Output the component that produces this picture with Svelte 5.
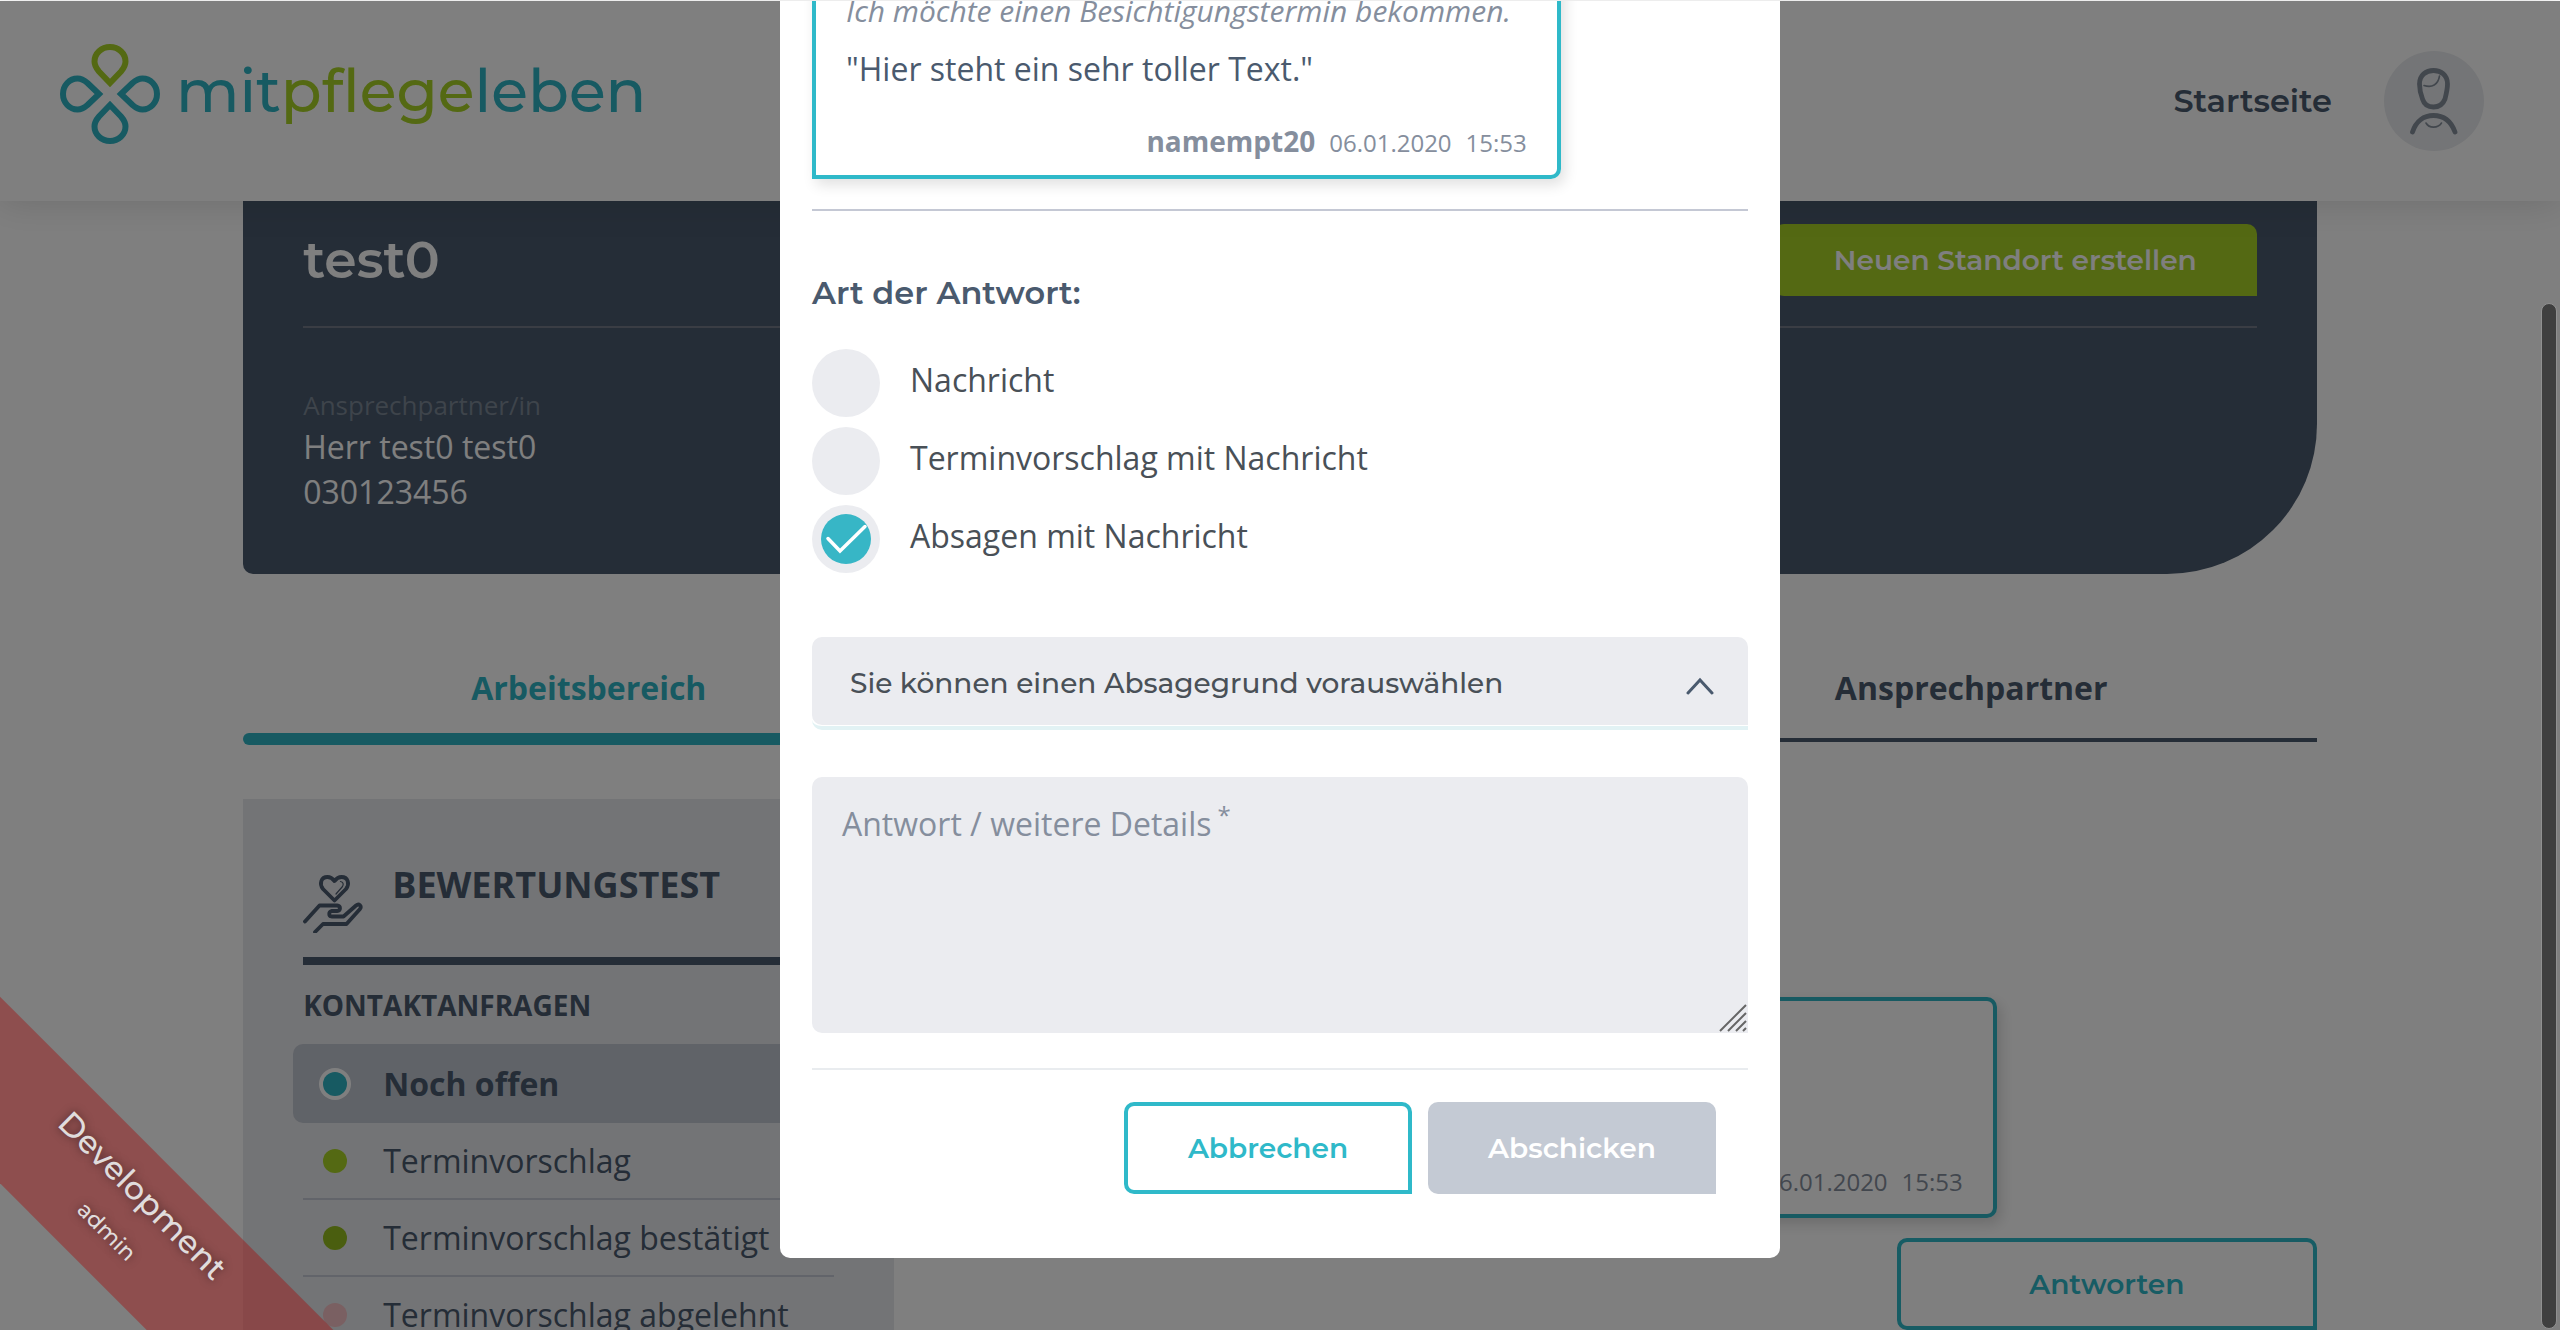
<script>
  let answer = $state('absage');
  let details = $state('');

  const kinds = [
    { id: 'nachricht', label: 'Nachricht' },
    { id: 'termin', label: 'Terminvorschlag mit Nachricht' },
    { id: 'absage', label: 'Absagen mit Nachricht' },
  ];

  const requests = [
    { label: 'Noch offen', tone: 'teal', active: true },
    { label: 'Terminvorschlag', tone: 'lime' },
    { label: 'Terminvorschlag bestätigt', tone: 'green' },
    { label: 'Terminvorschlag abgelehnt', tone: 'pink' },
  ];

  const petal =
    'M50 39 L39 27.5 C36 24 34.5 21.5 34.5 17.5 A15.5 14.5 0 0 1 65.5 17.5 C65.5 21.5 64 24 61 27.5 Z';
</script>

<div class="page">
  <header class="topbar">
    <a class="logo" href="#start" aria-label="mitpflegeleben">
      <svg viewBox="0 0 100 100" width="100" height="100" fill="none" stroke-width="6">
        {#each [90, 180, 270] as turn}
          <path stroke="#2fb4c4" d={petal} transform="rotate({turn} 50 50)" />
        {/each}
        <path stroke="#a8d226" d={petal} />
      </svg>
      <span class="wordmark">mit<b>pflege</b>leben</span>
    </a>
    <nav class="topnav">
      <a class="home" href="#start">Startseite</a>
      <button class="avatar" aria-label="Profil">
        <svg viewBox="0 0 100 100" width="100" height="100" fill="none" stroke="#848e9b" stroke-linecap="round">
          <path stroke-width="4.8" d="M35.5 33 C35.5 24 42 19.5 49.5 19.5 C57 19.5 63.5 24 63.5 33 C63.5 38 62 44 61 48 C59 53 55 56 49.5 56 C44 56 40 53 38.5 48 C37 44 35.5 38 35.5 33 Z" />
          <path stroke-width="1.6" d="M40 34.5 C48 37 54 34 55.5 25" />
          <path stroke-width="4.8" d="M28.5 81 C32 70 40 64.5 49.5 64.5 C59 64.5 67 70 71 81" />
          <path stroke-width="1.6" d="M42 72 C45 77.5 54 77.5 57.5 72" />
        </svg>
      </button>
    </nav>
  </header>

  <main>
    <section class="hero">
      <div class="hero-head">
        <h1>test0</h1>
        <button class="create">Neuen Standort erstellen</button>
      </div>
      <p class="hero-label">Ansprechpartner/in</p>
      <p class="hero-text">Herr test0 test0</p>
      <p class="hero-text">030123456</p>
    </section>

    <nav class="tabs">
      <a class="tab active" href="#arbeitsbereich">Arbeitsbereich</a>
      <span class="tab"></span>
      <a class="tab" href="#ansprechpartner">Ansprechpartner</a>
    </nav>

    <div class="content">
      <aside class="card">
        <div class="card-head">
          <svg viewBox="0 0 60 58" width="60" height="58" fill="none" stroke="#4a5a6e" stroke-width="3.8" stroke-linecap="round" stroke-linejoin="round">
            <path d="M31.5 25.5 L20 14 C16 9 18 2 24.5 2 C28 2 30 4 31.5 6 C33 4 35 2 38.5 2 C45 2 47 9 43 14 Z" />
            <path stroke-width="1.2" d="M33 19 L39.5 11.5 C41 9 40 7 37.5 6.5" />
            <path d="M2 46.5 L16.5 30.5 H34 C38 31 38 35.5 34 36 H28.5 C25.5 37 25.5 41 28.5 41.5 H40.5 L53 30.5 C56 28 59 31 57 34 L43.5 49 H20 L12 57" />
          </svg>
          <h2>BEWERTUNGSTEST</h2>
        </div>
        <h3>KONTAKTANFRAGEN</h3>
        <ul>
          {#each requests as item}
            <li class:active={item.active}>
              <a href="#anfragen"><i class="dot {item.tone}"></i>{item.label}</a>
            </li>
          {/each}
        </ul>
      </aside>

      <section class="thread">
        <div class="note">
          <div class="meta"><span>06.01.2020</span><span>15:53</span></div>
        </div>
        <button class="outline reply">Antworten</button>
      </section>
    </div>
  </main>

  <div class="backdrop">
    <form class="modal" onsubmit={(e) => e.preventDefault()}>
      <div class="bubble">
        <p class="subject">Ich möchte einen Besichtigungstermin bekommen.</p>
        <p class="quote">"Hier steht ein sehr toller Text."</p>
        <div class="meta"><strong>namempt20</strong><span>06.01.2020</span><span>15:53</span></div>
      </div>
      <fieldset>
        <legend>Art der Antwort:</legend>
        {#each kinds as kind}
          <label class="choice">
            <span class="mark">
              <input type="radio" name="kind" value={kind.id} bind:group={answer} />
              {#if answer === kind.id}
                <svg viewBox="0 0 68 68" width="68" height="68">
                  <circle cx="34" cy="34" r="25" fill="#37b6c6" />
                  <path d="M16 33.5 L28 46 L53 21.5" fill="none" stroke="#fff" stroke-width="3.5" stroke-linecap="round" />
                </svg>
              {/if}
            </span>
            <span class="choice-text">{kind.label}</span>
          </label>
        {/each}
      </fieldset>
      <div class="select">
        <select aria-label="Absagegrund">
          <option>Sie können einen Absagegrund vorauswählen</option>
        </select>
        <svg viewBox="0 0 28 18" width="28" height="18" fill="none" stroke="#4a5a6e" stroke-width="3" stroke-linecap="round">
          <path d="M2 16 L14 3 L26 16" />
        </svg>
      </div>
      <div class="area">
        <textarea id="details" bind:value={details}></textarea>
        <label for="details">Antwort / weitere Details<sup>*</sup></label>
        <svg viewBox="0 0 28 28" width="28" height="28" fill="none" stroke="#666" stroke-width="2">
          <path d="M1 27 L27 1 M9 27 L27 9 M17 27 L27 17 M24 27 L27 24" />
        </svg>
      </div>
      <div class="actions">
        <button type="button" class="outline">Abbrechen</button>
        <button type="submit" class="send">Abschicken</button>
      </div>
    </form>
    <div class="scrollbar"></div>
  </div>

  <div class="ribbon-layer">
    <div class="ribbon">
      <span class="env">Development</span>
      <span class="role">admin</span>
    </div>
  </div>
</div>

<style>
  :global(body) {
    margin: 0;
    background: #fff;
  }
  .page {
    --head: Montserrat, Inter, sans-serif;
    --ink: #4a5a6e;
    --teal: #2fb9c9;
    position: relative;
    box-sizing: border-box;
    height: 100vh;
    padding-top: 1px;
    overflow: hidden;
    font-family: 'Open Sans', sans-serif;
    font-size: 32px;
    color: var(--ink);
  }
  .page * {
    box-sizing: border-box;
  }
  h1, h2, h3, p, ul {
    margin: 0;
    padding: 0;
  }
  a {
    color: inherit;
    text-decoration: none;
  }
  button, select, textarea, input {
    margin: 0;
    padding: 0;
    border: 0;
    font: inherit;
  }

  .topbar {
    position: relative;
    z-index: 1;
    display: flex;
    align-items: center;
    justify-content: space-between;
    height: 200px;
    padding: 0 76px 0 60px;
    background: #fff;
    box-shadow: 0 0 36px rgba(0, 0, 0, 0.15);
  }
  .logo {
    display: flex;
    align-items: center;
    gap: 16px;
    padding-bottom: 14px;
  }
  .wordmark {
    padding-bottom: 6px;
    font: 500 60px/72px var(--head);
    color: #2fb4c4;
  }
  .wordmark b {
    font-weight: 500;
    color: #a8d226;
  }
  .topnav {
    display: flex;
    align-items: center;
    gap: 52px;
  }
  .home {
    font: 600 32px/40px var(--head);
  }
  .avatar {
    width: 100px;
    height: 100px;
    border-radius: 50%;
    background: #e9ebee;
  }

  main {
    width: 81%;
    margin: 0 auto;
  }
  .hero {
    padding: 23px 60px 60px;
    border-radius: 0 0 150px 10px;
    background: var(--ink);
    color: #fff;
  }
  .hero-head {
    display: flex;
    align-items: center;
    justify-content: space-between;
    padding-bottom: 30px;
    margin-bottom: 58px;
    border-bottom: 2px solid #747a88;
  }
  h1 {
    font: 600 52px/62px var(--head);
  }
  .create {
    width: 483px;
    height: 72px;
    border-radius: 10px 10px 0 10px;
    background: #a8d226;
    color: #fff;
    font: 600 28px/40px var(--head);
  }
  .hero-label {
    font-size: 26px;
    line-height: 38px;
    color: #7c8896;
  }
  .hero-text {
    line-height: 45px;
  }

  .tabs {
    display: grid;
    grid-template-columns: repeat(3, 1fr);
    margin-top: 90px;
    font-weight: 700;
    line-height: 48px;
    text-align: center;
  }
  .tab {
    padding-bottom: 26px;
    margin-bottom: 3px;
    border-bottom: 4px solid var(--ink);
  }
  .tab.active {
    margin: 0;
    padding-bottom: 0;
    border: 0;
    color: #2fb4c4;
  }
  .tab.active::after {
    content: '';
    display: block;
    height: 12px;
    margin-top: 21px;
    border-radius: 6px;
    background: #2fb4c4;
  }

  .content {
    display: grid;
    grid-template-columns: 651px 1fr;
    margin-top: 54px;
  }
  .card {
    padding: 60px;
    background: #e7e8ec;
  }
  .card-head {
    display: flex;
    gap: 29px;
    padding-bottom: 24px;
    border-bottom: 8px solid var(--ink);
  }
  .card-head svg {
    margin-top: 16px;
  }
  h2 {
    font-size: 36px;
    line-height: 52px;
  }
  h3 {
    margin: 20px 0 19px;
    font-size: 28px;
    line-height: 40px;
  }
  ul {
    list-style: none;
  }
  li {
    height: 77px;
    border-bottom: 2px solid #c4c8d4;
  }
  li.active {
    height: 79px;
    margin: 0 -10px;
    padding: 0 10px;
    border: 0;
    border-radius: 10px;
    background: #c1c6d0;
    font-weight: 700;
  }
  li a {
    display: flex;
    align-items: center;
    gap: 36px;
    height: 100%;
    padding-left: 20px;
  }
  .dot {
    width: 24px;
    height: 24px;
    border-radius: 50%;
  }
  .teal {
    background: #2fb4c4;
    box-shadow: 0 0 0 4px #fff;
  }
  .lime {
    background: #a8d226;
  }
  .green {
    background: #94bc1e;
  }
  .pink {
    background: #f4c0c4;
  }

  .thread {
    display: flex;
    flex-direction: column;
    align-items: flex-end;
    padding-top: 198px;
  }
  .note {
    display: flex;
    align-items: flex-end;
    justify-content: flex-end;
    width: 750px;
    height: 221px;
    margin-right: 320px;
    padding: 12px 30px;
    border: 4px solid #2fb4c4;
    border-radius: 10px 10px 10px 0;
    box-shadow: 4px 6px 14px rgba(0, 0, 0, 0.15);
  }
  .meta {
    display: flex;
    align-items: baseline;
    justify-content: flex-end;
    gap: 14px;
    font-size: 24px;
    line-height: 40px;
    color: #858e9d;
  }
  .meta strong {
    font-size: 28px;
  }
  .outline {
    width: 288px;
    height: 92px;
    border: 4px solid var(--teal);
    border-radius: 10px 10px 0 10px;
    background: transparent;
    color: var(--teal);
    font: 600 28px/40px var(--head);
  }
  .reply {
    width: 420px;
    margin-top: 20px;
  }

  .backdrop {
    position: absolute;
    z-index: 2;
    inset: 1px 0 0;
    overflow: hidden;
    background: rgba(0, 0, 0, 0.5);
  }
  .modal {
    width: 1000px;
    margin: -60px auto 0;
    padding: 32px 32px 64px;
    border-radius: 10px;
    background: #fff;
  }
  .bubble {
    width: 80%;
    padding: 12px 30px;
    border: 4px solid var(--teal);
    border-radius: 10px 10px 10px 0;
    box-shadow: 4px 6px 14px rgba(0, 0, 0, 0.12);
  }
  .subject {
    font-size: 30px;
    font-style: italic;
    line-height: 44px;
    color: #858e9d;
    white-space: nowrap;
  }
  .quote {
    margin: 12px 0 28px;
    line-height: 48px;
  }
  fieldset {
    display: grid;
    gap: 10px;
    margin: 30px 0 0;
    padding: 58px 0 64px;
    border: 0;
    border-top: 2px solid #c4c8d4;
  }
  legend {
    float: left;
    margin-bottom: 22px;
    padding: 0;
    font: 600 32px/48px var(--head);
  }
  .choice {
    display: flex;
    align-items: center;
    gap: 30px;
    color: #495057;
  }
  .mark {
    display: grid;
  }
  .mark > :global(*) {
    grid-area: 1 / 1;
  }
  .mark svg {
    pointer-events: none;
  }
  .mark input {
    appearance: none;
    width: 68px;
    height: 68px;
    border-radius: 50%;
    background: #ebecf0;
  }
  .choice-text {
    padding-bottom: 6px;
    line-height: 44px;
  }
  .select {
    position: relative;
    padding-bottom: 1px;
    border-bottom: 4px solid #e2f2f4;
    border-radius: 10px 10px 0 10px;
  }
  select {
    display: block;
    appearance: none;
    width: 100%;
    height: 88px;
    padding: 4px 80px 0 38px;
    border-radius: 10px 10px 0 10px;
    background: #ebecf0;
    color: #495057;
    font: 500 28px/40px var(--head);
  }
  .select svg {
    position: absolute;
    right: 34px;
    top: 40px;
    pointer-events: none;
  }
  .area {
    position: relative;
    margin-top: 47px;
  }
  textarea {
    display: block;
    width: 100%;
    height: 256px;
    padding: 25px 30px;
    border-radius: 10px 10px 0 10px;
    background: #ebecf0;
    color: #495057;
    line-height: 44px;
    resize: none;
  }
  .area label {
    position: absolute;
    left: 30px;
    top: 25px;
    line-height: 44px;
    color: #858e9d;
  }
  sup {
    margin-left: 6px;
    font-size: 24px;
    line-height: 0;
  }
  .area svg {
    position: absolute;
    right: 1px;
    bottom: 1px;
  }
  .actions {
    display: flex;
    justify-content: flex-end;
    gap: 16px;
    margin-top: 35px;
    padding: 32px 32px 0;
    border-top: 2px solid #e9ecef;
  }
  .send {
    width: 288px;
    height: 92px;
    border-radius: 10px 10px 0 10px;
    background: #c4cad4;
    color: #fff;
    font: 600 28px/40px var(--head);
  }
  .scrollbar {
    position: absolute;
    top: 302px;
    right: 3px;
    bottom: 1px;
    width: 16px;
    border: 1px solid #909090;
    border-radius: 8px;
    background: #3f3f3f;
  }

  .ribbon-layer {
    position: absolute;
    z-index: 3;
    inset: 0;
    overflow: hidden;
    pointer-events: none;
  }
  .ribbon {
    position: absolute;
    left: -196px;
    bottom: 50px;
    display: flex;
    flex-direction: column;
    align-items: center;
    width: 640px;
    height: 132px;
    padding-top: 20px;
    background: rgba(161, 20, 20, 0.45);
    color: #e0dcdc;
    font-family: var(--head);
    font-weight: 500;
    text-shadow: 0 0 8px rgba(0, 0, 0, 0.5);
    transform: rotate(45deg);
  }
  .env {
    font-size: 32px;
    line-height: 40px;
  }
  .role {
    margin-top: 16px;
    font-size: 22px;
    line-height: 30px;
  }
</style>
